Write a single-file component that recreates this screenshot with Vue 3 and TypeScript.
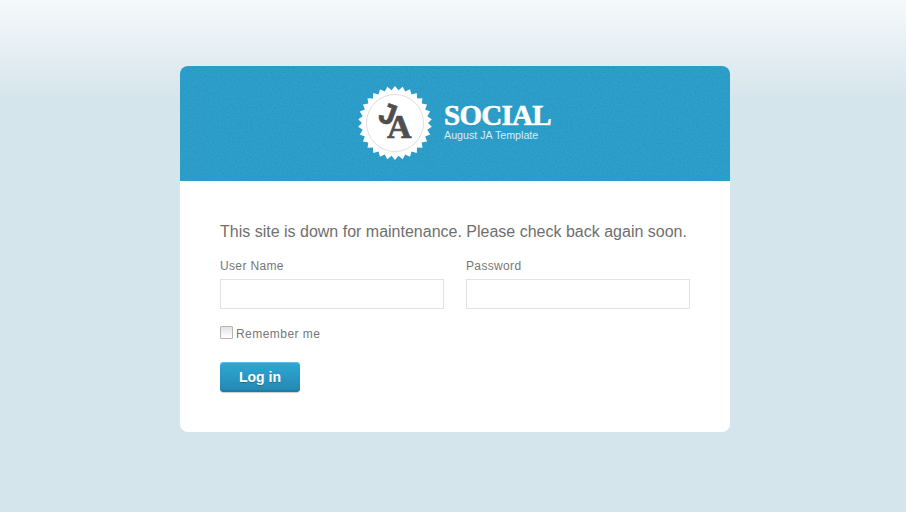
<script setup lang="ts">
const teeth = 30
const cx = 40
const cy = 40
const pts: string[] = []
for (let i = 0; i < teeth * 2; i++) {
  const r = i % 2 === 0 ? 37 : 33
  const a = (Math.PI * i) / teeth - Math.PI / 2
  pts.push(`${(cx + r * Math.cos(a)).toFixed(2)},${(cy + r * Math.sin(a)).toFixed(2)}`)
}
const seal = pts.join(' ')
</script>

<template>
  <div class="page">
    <div class="card">
      <header class="head">
        <svg class="noise" width="100%" height="100%" aria-hidden="true">
          <filter id="grain" x="0" y="0" width="100%" height="100%">
            <feTurbulence type="fractalNoise" baseFrequency="0.8" numOctaves="2" seed="4" />
            <feColorMatrix type="matrix" values="0 0 0 0 0  0 0 0 0 0.15  0 0 0 0 0.3  0.35 0.35 0 0 -0.32" />
          </filter>
          <rect width="100%" height="100%" filter="url(#grain)" />
        </svg>
        <div class="brand">
          <div class="seal">
            <svg width="80" height="80" viewBox="0 0 80 80" aria-hidden="true">
              <polygon :points="seal" fill="#fff" />
              <circle cx="40" cy="40" r="28.5" fill="#fff" stroke="#dfdfdf" stroke-width="1" />
            </svg>
            <span class="mono j">J</span>
            <span class="mono a">A</span>
          </div>
          <div class="titles">
            <div class="name">SOCIAL</div>
            <div class="slogan">August JA Template</div>
          </div>
        </div>
      </header>
      <main class="body">
        <p class="notice">This site is down for maintenance. Please check back again soon.</p>
        <form class="form" @submit.prevent>
          <div class="fields">
            <label class="field">
              <span class="label">User Name</span>
              <input class="input" type="text" />
            </label>
            <label class="field">
              <span class="label">Password</span>
              <input class="input" type="password" />
            </label>
          </div>
          <label class="remember">
            <span class="box"></span>
            <span>Remember me</span>
          </label>
          <button class="login" type="submit">Log in</button>
        </form>
      </main>
    </div>
  </div>
</template>

<style>
html, body { margin: 0; background: #d5e5ec; }
</style>

<style scoped>
.page {
  box-sizing: border-box;
  height: 512px;
  padding: 66px 0 0 4px;
  overflow: hidden;
  background: linear-gradient(to bottom, #f6f9fb 0, #d5e5ec 100px, #d5e5ec 100%);
  font-family: "Liberation Sans", Arial, sans-serif;
}
.card {
  width: 550px;
  height: 366px;
  margin: 0 auto;
  background: #fff;
  border-radius: 8px;
  overflow: hidden;
}
.head {
  position: relative;
  height: 115px;
  background: #2e9fca;
  display: flex;
  padding-left: 175px;
}
.noise { position: absolute; inset: 0; }
.brand {
  position: relative;
  display: flex;
  align-items: flex-start;
}
.seal {
  position: relative;
  width: 80px;
  height: 80px;
  margin-top: 17px;
}
.seal svg { display: block; }
.mono {
  position: absolute;
  color: #4f4f4f;
  font-weight: 700;
  line-height: 1;
}
.j {
  left: 23px;
  top: 17px;
  font-family: "Liberation Mono", monospace;
  font-size: 31px;
  -webkit-text-stroke: 0.6px #4f4f4f;
  transform: rotate(20deg);
}
.a {
  left: 32px;
  top: 27px;
  font-family: "Liberation Serif", serif;
  font-size: 34px;
  -webkit-text-stroke: 0.7px #4f4f4f;
}
.titles {
  margin-left: 9px;
  color: #fff;
}
.name {
  margin-top: 36px;
  font-family: "Liberation Serif", serif;
  font-weight: 700;
  font-size: 29px;
  line-height: 26px;
  letter-spacing: -0.7px;
  -webkit-text-stroke: 0.6px #fff;
  text-shadow: 0 1px 0 rgba(0, 0, 0, 0.15);
}
.slogan {
  margin-top: 0;
  font-size: 10.7px;
  line-height: 14px;
  color: #d6ecf5;
}
.body { padding: 40px 40px 0; }
.notice {
  margin: 0;
  font-size: 16px;
  line-height: 22px;
  color: #6f6f6f;
}
.form { margin: 0; }
.fields {
  display: grid;
  grid-template-columns: 224px 224px;
  column-gap: 22px;
  margin-top: 16px;
}
.field { display: block; }
.label {
  display: block;
  font-size: 12px;
  line-height: 14px;
  letter-spacing: 0.35px;
  color: #777;
  margin-bottom: 6px;
}
.input {
  display: block;
  box-sizing: border-box;
  width: 224px;
  height: 30px;
  margin: 0;
  background: #fff;
  border: 1px solid #e3e3e3;
  outline: 0;
}
.remember {
  display: flex;
  align-items: flex-start;
  gap: 3px;
  margin-top: 18px;
  font-size: 12px;
  line-height: 14px;
  letter-spacing: 0.45px;
  color: #777;
}
.box {
  box-sizing: border-box;
  width: 13px;
  height: 13px;
  margin-top: -1px;
  border: 1px solid #b5b5b5;
  border-radius: 1px;
  background: linear-gradient(to bottom, #e4e4e4, #fff);
}
.login {
  display: block;
  width: 80px;
  height: 30px;
  margin-top: 21px;
  padding: 0;
  border: 0;
  border-radius: 4px;
  background: linear-gradient(to bottom, #2fa8d6, #2387b0);
  box-shadow: inset 0 1px 0 #5cbfe3, inset 0 -2px 0 #1d7ea5, 0 1px 1px rgba(0, 0, 0, 0.2);
  color: #fff;
  font-family: "Liberation Sans", Arial, sans-serif;
  font-weight: 700;
  font-size: 14px;
  text-shadow: 0 1px 0 rgba(0, 0, 0, 0.25);
}
</style>
